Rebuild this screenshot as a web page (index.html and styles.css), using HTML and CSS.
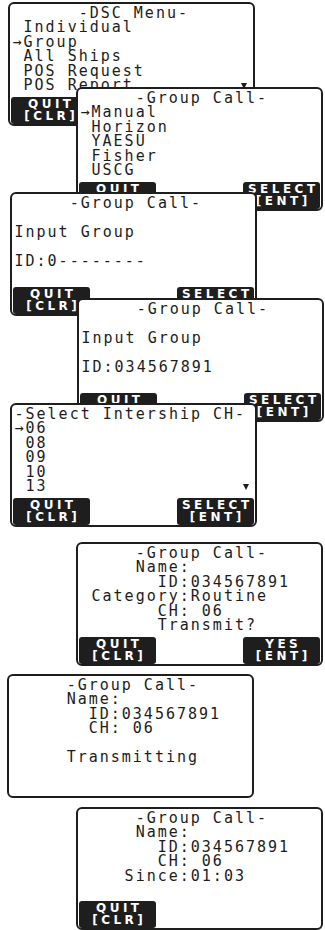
FILE: index.html
```html
<!DOCTYPE html>
<html lang="en">
<head>
    <meta charset="UTF-8">
    <meta name="viewport" content="width=device-width, initial-scale=1.0">
    <title>DSC Group Call</title>
    <link rel="stylesheet" href="styles.css">
</head>
<body>
<div class="sheet">

    <section class="lcd s1">
<pre class="lcd-text">      -DSC Menu-
 Individual
→Group
 All Ships
 POS Request
 POS Report<span class="more"></span></pre>
        <div class="keys">
            <span class="key"><b>QUIT</b><b>[CLR]</b></span>
        </div>
    </section>

    <section class="lcd s2">
<pre class="lcd-text">     -Group Call-
→Manual
 Horizon
 YAESU
 Fisher
 USCG</pre>
        <div class="keys">
            <span class="key"><b>QUIT</b><b>[CLR]</b></span>
            <span class="key"><b>SELECT</b><b>[ENT]</b></span>
        </div>
    </section>

    <section class="lcd s3">
<pre class="lcd-text">     -Group Call-

Input Group

ID:0--------</pre>
        <div class="keys">
            <span class="key"><b>QUIT</b><b>[CLR]</b></span>
            <span class="key"><b>SELECT</b><b>[ENT]</b></span>
        </div>
    </section>

    <section class="lcd s4">
<pre class="lcd-text">     -Group Call-

Input Group

ID:034567891</pre>
        <div class="keys">
            <span class="key"><b>QUIT</b><b>[CLR]</b></span>
            <span class="key"><b>SELECT</b><b>[ENT]</b></span>
        </div>
    </section>

    <section class="lcd s5">
<pre class="lcd-text">-Select Intership CH-
→06
 08
 09
 10
 13<span class="more"></span></pre>
        <div class="keys">
            <span class="key"><b>QUIT</b><b>[CLR]</b></span>
            <span class="key"><b>SELECT</b><b>[ENT]</b></span>
        </div>
    </section>

    <section class="lcd s6">
<pre class="lcd-text">     -Group Call-
     Name:
       ID:034567891
 Category:Routine
       CH: 06
       Transmit?</pre>
        <div class="keys">
            <span class="key"><b>QUIT</b><b>[CLR]</b></span>
            <span class="key"><b>YES</b><b>[ENT]</b></span>
        </div>
    </section>

    <section class="lcd s7">
<pre class="lcd-text">     -Group Call-
     Name:
       ID:034567891
       CH: 06

     Transmitting</pre>
    </section>

    <section class="lcd s8">
<pre class="lcd-text">     -Group Call-
     Name:
       ID:034567891
       CH: 06
    Since:01:03</pre>
        <div class="keys">
            <span class="key"><b>QUIT</b><b>[CLR]</b></span>
        </div>
    </section>

</div>
</body>
</html>
```

FILE: styles.css
```css
body {
    margin: 0;
    background-color: #ffffff;
    font-family: "DejaVu Sans Mono", monospace;
}
.sheet {
    position: relative;
    width: 325px;
    height: 930px;
    overflow: hidden;
}

/* each screen is a window on the sheet, later ones lie over earlier ones */
.lcd {
    position: absolute;
    width: 247px;
    height: 124px;
    box-sizing: border-box;
    display: flex;
    flex-direction: column;
    background-color: #ffffff;
    border: 2px solid #1e1e1e;
    border-radius: 6px;
}
.s1 { left: 8px;  top: 2px; }
.s2 { left: 76px; top: 87px; }
.s3 { left: 10px; top: 192px; }
.s4 { left: 77px; top: 298px; }
.s5 { left: 10px; top: 403px; }
.s6 { left: 76px; top: 542px; }
.s7 { left: 7px;  top: 674px; }
.s8 { left: 76px; top: 807px; height: 123px; }

.lcd-text {
    margin: 0;
    padding: 1.5px 2px 0 2.5px;
    font-family: "DejaVu Sans Mono", monospace;
    font-size: 15px;
    line-height: 14.5px;
    letter-spacing: 2px;
    color: #1c1c1c;
}

.more {
    float: right;
    margin: 5px 4px 0 0;
    width: 0;
    height: 0;
    border-left: 3.5px solid transparent;
    border-right: 3.5px solid transparent;
    border-top: 6px solid #1c1c1c;
}

.keys {
    display: flex;
    justify-content: space-between;
    margin-top: auto;
    padding: 0 1px;
}
.key {
    display: flex;
    flex-direction: column;
    align-items: center;
    width: 77px;
    height: 27px;
    box-sizing: border-box;
    padding-top: 0.5px;
    background-color: #1e1e1e;
    border-radius: 3px;
    color: #ffffff;
    font-family: "DejaVu Sans", sans-serif;
    font-size: 12px;
    line-height: 12.5px;
    letter-spacing: 3.5px;
}
.key b {
    font-weight: bold;
    margin-right: -3.5px;
}
```
